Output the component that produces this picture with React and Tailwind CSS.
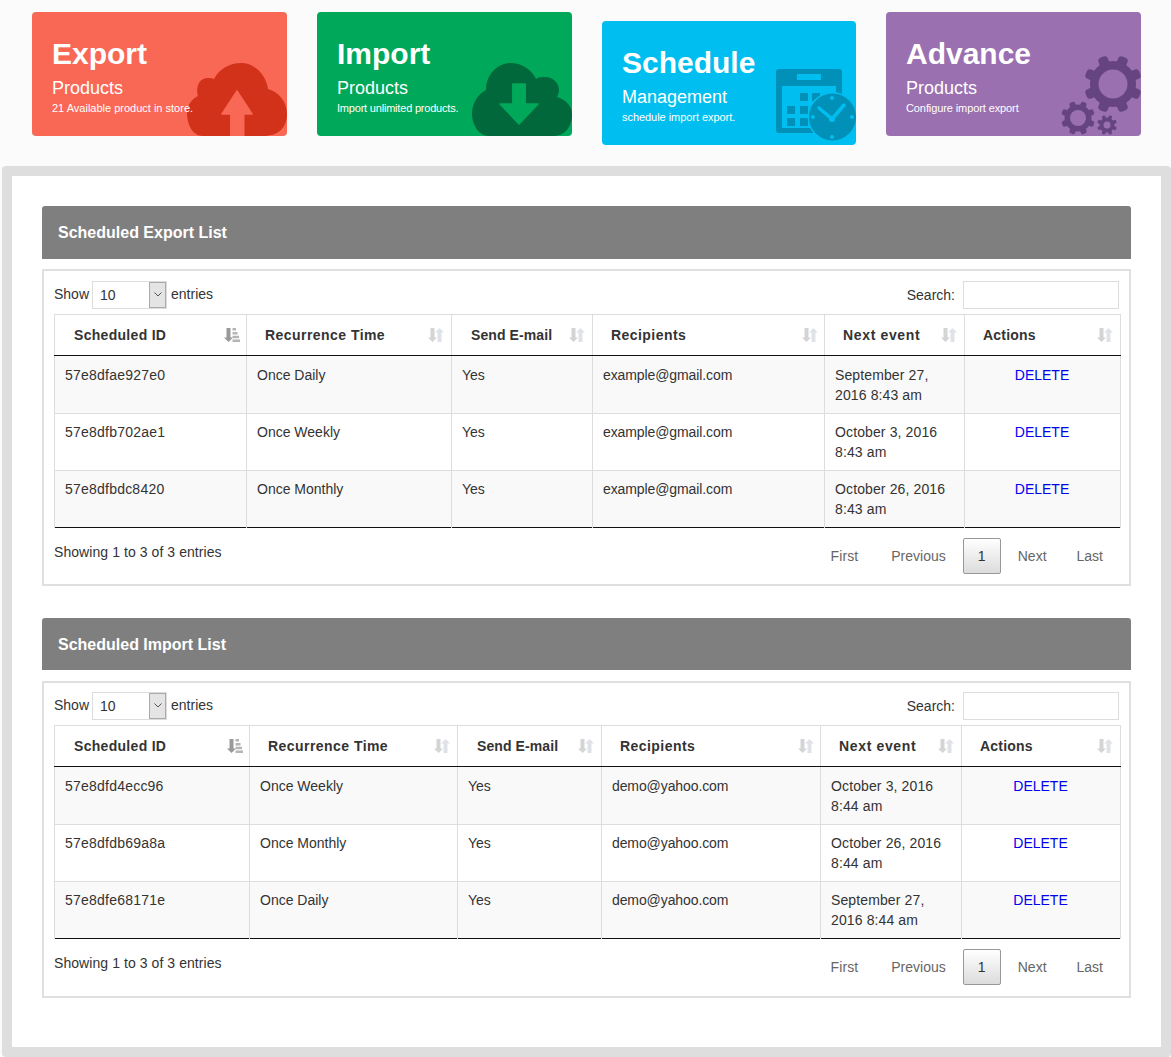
const font = { fontFamily: '"Liberation Sans", Arial, sans-serif' }

const CARDS = [
  { title: 'Export', sub: 'Products', note: '21 Available product in store.', noteClass: '', bg: 'bg-[#f86855]', shift: '', width: 'w-[255px]', icon: 'up' },
  { title: 'Import', sub: 'Products', note: 'Import unlimited products.', noteClass: 'tracking-[-0.2px]', bg: 'bg-[#00a85a]', shift: '', width: 'w-[255px]', icon: 'down' },
  { title: 'Schedule', sub: 'Management', note: 'schedule import export.', noteClass: 'tracking-[-0.05px]', bg: 'bg-[#00bff0]', shift: 'mt-[9px]', width: 'w-[254px]', icon: 'calendar' },
  { title: 'Advance', sub: 'Products', note: 'Configure import export', noteClass: 'tracking-[-0.1px]', bg: 'bg-[#9a70b1]', shift: '', width: 'w-[255px]', icon: 'gears' },
]

const EXPORT_ROWS = [
  ['57e8dfae927e0', 'Once Daily', 'example@gmail.com', 'September 27,', '2016 8:43 am'],
  ['57e8dfb702ae1', 'Once Weekly', 'example@gmail.com', 'October 3, 2016', '8:43 am'],
  ['57e8dfbdc8420', 'Once Monthly', 'example@gmail.com', 'October 26, 2016', '8:43 am'],
]
const IMPORT_ROWS = [
  ['57e8dfd4ecc96', 'Once Weekly', 'demo@yahoo.com', 'October 3, 2016', '8:44 am'],
  ['57e8dfdb69a8a', 'Once Monthly', 'demo@yahoo.com', 'October 26, 2016', '8:44 am'],
  ['57e8dfe68171e', 'Once Daily', 'demo@yahoo.com', 'September 27,', '2016 8:44 am'],
]

function CloudUp() {
  return (
    <svg viewBox="0 0 100 73" className="absolute right-0 bottom-0 w-[100px] h-[73px]">
      <path fill="#d23219" d="M16 73C6 73 0 62 0 50c0-8 5-14 11-17-2-5-1-18 10-18 2 0 4 0 6 1C32 6 43 0 54 0c14 0 25 12 27 26 11 3 19 13 19 25 0 13-8 22-24 22z" />
      <path fill="#f86855" stroke="#f86855" strokeWidth="1.5" strokeLinejoin="round" d="M43.800 73V51H35L50 28l15 23h-8.200v22z" />
    </svg>
  )
}

function CloudDown() {
  return (
    <svg viewBox="0 0 100 73" className="absolute right-0 bottom-0 w-[100px] h-[73px]">
      <path fill="#01683b" d="M17 73C7 73 0 62 0 51c0-11 6-20 14-24C14 12 25 0 39 0c11 0 21 7 25 16 3-2 6-2 9-2 8 0 14 6 14 13 0 3-1 5-2 7 9 3 15 9 15 17 0 13-7 22-19 22z" />
      <path fill="#00a85a" stroke="#00a85a" strokeWidth="1.5" strokeLinejoin="round" d="M40.800 21h12.400v20H66L47 61 28 41h12.800z" />
    </svg>
  )
}

function CalendarClock() {
  return (
    <svg viewBox="0 0 80 76" className="absolute right-0 bottom-0 w-[80px] h-[76px]">
      <rect x="0" y="0" width="66" height="64" rx="3" fill="#0090b8" />
      <rect x="21" y="5" width="24" height="6" fill="#00bff0" />
      <rect x="6" y="17" width="54" height="42" fill="#00bff0" />
      {[[24, 24], [36, 24], [11, 37], [24, 37], [11, 49], [24, 49]].map(([x, y]) => (
        <rect key={x + '-' + y} x={x} y={y} width="8" height="8" fill="#0090b8" />
      ))}
      <circle cx="56.500" cy="48" r="25" fill="#00bff0" />
      <circle cx="56.500" cy="48" r="23.500" fill="#0090b8" />
      <path d="M43 39l13 11 12-14" fill="none" stroke="#00bff0" strokeWidth="3.500" strokeLinecap="round" strokeLinejoin="round" />
      <circle cx="56" cy="50" r="3" fill="#00bff0" />
      <circle cx="56" cy="29" r="2" fill="#00bff0" />
      <circle cx="56" cy="68" r="2" fill="#00bff0" />
      <circle cx="37" cy="48" r="2" fill="#00bff0" />
      <circle cx="76" cy="48" r="2" fill="#00bff0" />
    </svg>
  )
}

function Gear({ cx, cy, outer, body, hole, tooth }) {
  return (
    <g>
      {[0, 45, 90, 135].map((deg) => (
        <rect
          key={deg}
          x={cx - tooth / 2}
          y={cy - outer}
          width={tooth}
          height={outer * 2}
          rx={tooth / 3}
          fill="#654480"
          transform={`rotate(${deg + 22.5} ${cx} ${cy})`}
        />
      ))}
      <circle cx={cx} cy={cy} r={body} fill="#654480" />
      <circle cx={cx} cy={cy} r={hole} fill="#9a70b1" />
    </g>
  )
}

function Gears() {
  return (
    <svg viewBox="0 0 80 80" className="absolute right-0 bottom-0 w-[80px] h-[80px]">
      <Gear cx={52} cy={28} outer={29} body={23} hole={14.500} tooth={10} />
      <Gear cx={17} cy={62} outer={17} body={13.500} hole={8} tooth={6} />
      <Gear cx={46} cy={69} outer={10} body={7.500} hole={3.500} tooth={3.500} />
    </svg>
  )
}

function CardIcon({ icon }) {
  if (icon === 'up') return <CloudUp />
  if (icon === 'down') return <CloudDown />
  if (icon === 'calendar') return <CalendarClock />
  return <Gears />
}

function Card({ title, sub, note, noteClass, bg, shift, width, icon }) {
  return (
    <div className={`relative h-[124px] rounded-[4px] overflow-hidden text-white pl-[20px] pt-[24px] ${width} ${bg} ${shift}`}>
      <div className="text-[30px] leading-[36px] font-bold">{title}</div>
      <div className="text-[18px] leading-[20px] mt-[6px]">{sub}</div>
      <div className={`text-[11px] leading-[12px] mt-[4px] relative z-10 ${noteClass}`}>{note}</div>
      <CardIcon icon={icon} />
    </div>
  )
}

function SortBoth() {
  return (
    <svg viewBox="0 0 16 14" className="w-[16px] h-[14px]">
      <path fill="#d4d4d4" d="M2.500 0h4v9.500H9L4.500 14 0 9.500h2.500z" />
      <path fill="#dfe3e8" d="M9.500 14h4V4.500H16L11.500 0 7 4.500h2.500z" />
    </svg>
  )
}

function SortActive() {
  return (
    <svg viewBox="0 0 16 14" className="w-[16px] h-[14px]">
      <path fill="#9a9a9a" d="M2.500 0h4v9.500H9L4.500 14 0 9.500h2.500z" />
      <path fill="#b5b5b5" d="M8.500 0H12v2.500H8.500zM8.500 4H13.500v2.500H8.500zM8.500 7.800H15v2.500H8.500zM8.500 11.500H16V14H8.500z" />
    </svg>
  )
}

const HEADERS = [
  { label: 'Scheduled ID', tracking: 'tracking-[0.3px]' },
  { label: 'Recurrence Time', tracking: 'tracking-[0.45px]' },
  { label: 'Send E-mail', tracking: 'tracking-[0.1px]' },
  { label: 'Recipients', tracking: 'tracking-[0.45px]' },
  { label: 'Next event', tracking: 'tracking-[0.65px]' },
  { label: 'Actions', tracking: 'tracking-[0.2px]' },
]

function DataTable({ rows, widths, headPads, iconPads }) {
  return (
    <table className="w-[1067px] table-fixed border-collapse text-[14px] text-[#333]">
      <colgroup>
        {widths.map((w, i) => (
          <col key={i} style={{ width: w }} />
        ))}
      </colgroup>
      <thead>
        <tr className="h-[41px]">
          {HEADERS.map((h, i) => (
            <th key={h.label} className="border border-[#ddd] border-b-[#111] p-0 font-bold text-left">
              <div className="flex items-center justify-between" style={{ paddingLeft: headPads[i], paddingRight: iconPads[i] }}>
                <span className={h.tracking}>{h.label}</span>
                {i === 0 ? <SortActive /> : <SortBoth />}
              </div>
            </th>
          ))}
        </tr>
      </thead>
      <tbody>
        {rows.map((r, idx) => {
          const pad = idx === 0 ? 'pt-[9px]' : 'pt-[8px]'
          const cell = `border-x border-[#ddd] px-[10px] ${pad}`
          return (
            <tr key={r[0]} className="h-[57px] first:h-[58px] odd:bg-[#f9f9f9] bg-white align-top leading-[20px] border-b border-[#ddd] last:border-b-[#111]">
              <td className={`${cell} tracking-[0.22px]`}>{r[0]}</td>
              <td className={cell}>{r[1]}</td>
              <td className={cell}>Yes</td>
              <td className={`${cell} tracking-[-0.1px]`}>{r[2]}</td>
              <td className={`${cell} tracking-[0.12px]`}>
                <div>{r[3]}</div>
                <div>{r[4]}</div>
              </td>
              <td className={`border-x border-[#ddd] pr-[1px] text-center text-[#0000ee] ${pad}`}>DELETE</td>
            </tr>
          )
        })}
      </tbody>
    </table>
  )
}

function Section({ title, rows, widths, headPads, iconPads, barClass, boxClass, controlsClass, pagerClass }) {
  return (
    <section>
      <div className={`rounded-t-[3px] bg-[#7f7f7f] text-white font-bold text-[16px] pl-[16px] flex items-center ${barClass}`}>{title}</div>
      <div className={`h-[317px] border-2 border-[#e0e0e0] pl-[10px] pr-[8px] text-[14px] text-[#333] ${boxClass}`}>
        <div className={`flex items-center justify-between ${controlsClass}`}>
          <div className="flex items-center">
            <span>Show</span>
            <div className="ml-[3px] mr-[4px] w-[75px] h-[28px] border border-[#ddd] flex items-center justify-between">
              <span className="pl-[7px] pt-[1px]">10</span>
              <span className="w-[17px] h-[26px] bg-[#e4e4e4] border border-[#aaa] flex items-center justify-center">
                <svg viewBox="0 0 8 5" className="w-[8px] h-[5px]">
                  <path d="M.5.5L4 4 7.500.5" fill="none" stroke="#555" strokeWidth="1" />
                </svg>
              </span>
            </div>
            <span>entries</span>
          </div>
          <div className="flex items-center mr-[2px]">
            <span className="mt-[1px]">Search:</span>
            <div className="ml-[8px] w-[156px] h-[28px] border border-[#ddd] bg-white"></div>
          </div>
        </div>
        <DataTable rows={rows} widths={widths} headPads={headPads} iconPads={iconPads} />
        <div className="flex justify-between">
          <div className="pt-[14px] tracking-[0.07px]">Showing 1 to 3 of 3 entries</div>
          <div className={`flex items-center h-[36px] text-[#666] mr-[1px] ${pagerClass}`}>
            <span className="pl-[15px] pr-[17px] tracking-[0.1px]">First</span>
            <span className="px-[15px] ml-[1px]">Previous</span>
            <span className="ml-[2px] w-[38px] h-[36px] rounded-[2px] border border-[#979797] bg-linear-to-b from-white to-[#dcdcdc] text-[#333] flex items-center justify-center">1</span>
            <span className="pl-[16px] pr-[14px] ml-[1px]">Next</span>
            <span className="pl-[15px] pr-[17px] ml-[1px]">Last</span>
          </div>
        </div>
      </div>
    </section>
  )
}

export default function App() {
  return (
    <div className="w-[1171px] h-[1057px] overflow-hidden bg-[#fbfbfb]" style={font}>
      <div className="flex items-start gap-[30px] pl-[32px] pt-[12px] h-[166px]">
        {CARDS.map((c) => (
          <Card key={c.title} {...c} />
        ))}
      </div>
      <div className="ml-[2px] w-[1169px] h-[891px] border-[10px] border-[#dedede] rounded-[4px] bg-white px-[30px] pt-[30px]">
        <Section
          title="Scheduled Export List"
          rows={EXPORT_ROWS}
          widths={['192px', '205px', '141px', '232px', '140px', '156px']}
          headPads={['19px', '18px', '19px', '18px', '18px', '18px']}
          iconPads={['6px', '7px', '7px', '6px', '7px', '7px']}
          barClass="h-[53px]"
          boxClass="mt-[10px]"
          controlsClass="h-[43px] pt-[4px]"
          pagerClass="mt-[10px]"
        />
        <div className="h-[32px]"></div>
        <Section
          title="Scheduled Import List"
          rows={IMPORT_ROWS}
          widths={['195px', '208px', '144px', '219px', '141px', '159px']}
          headPads={['19px', '18px', '19px', '18px', '18px', '18px']}
          iconPads={['6px', '7px', '7px', '6px', '7px', '7px']}
          barClass="h-[52px] pt-[1px]"
          boxClass="mt-[11px]"
          controlsClass="h-[42px] pt-[3px]"
          pagerClass="mt-[10px]"
        />
      </div>
    </div>
  )
}
